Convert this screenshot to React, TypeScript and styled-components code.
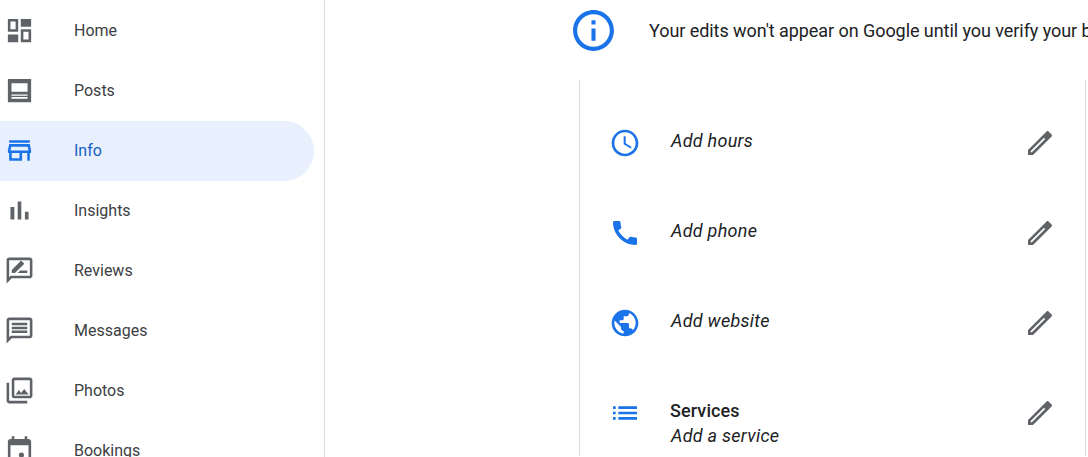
import React from "react";
import styled, { createGlobalStyle } from "styled-components";

const GlobalStyle = createGlobalStyle`
  html, body {
    margin: 0;
    height: 100%;
    overflow: hidden;
    background: #ffffff;
    font-family: Roboto, "Liberation Sans", sans-serif;
  }
`;

const StPage = styled.div`
  display: flex;
  width: 1088px;
  height: 457px;
  overflow: hidden;
`;

const StSidebar = styled.nav`
  flex: 0 0 325px;
  height: 457px;
  padding-right: 10px;
  box-sizing: border-box;
  border-right: 1px solid #dadce0;
  overflow: hidden;
`;

const StNavItem = styled.div<{ $active?: boolean }>`
  display: flex;
  align-items: center;
  gap: 39.5px;
  flex: none;
  height: 60px;
  box-sizing: border-box;
  padding-left: 3.5px;
  padding-bottom: ${({ $active }) => ($active ? "2px" : "0")};
  margin: ${({ $active }) => ($active ? "1px 0 -1px" : "0")};
  border-radius: 0 30px 30px 0;
  background: ${({ $active }) => ($active ? "#e8f0fe" : "transparent")};
  color: ${({ $active }) => ($active ? "#185fc4" : "#3c4043")};
  font-size: 16px;
`;

const StNavIcon = styled.svg<{ $active?: boolean }>`
  flex: none;
  width: 31px;
  height: 31px;
  margin-top: 1px;
  fill: ${({ $active }) => ($active ? "#1a73e8" : "#5f6368")};
`;

const StMain = styled.main`
  flex: 1;
  min-width: 0;
  padding-left: 254px;
  overflow: hidden;
`;

const StBanner = styled.div`
  display: flex;
  align-items: center;
  gap: 31px;
  height: 80px;
  margin-left: -10px;
  padding-bottom: 20px;
  box-sizing: border-box;
  white-space: nowrap;
  color: #202124;
  font-size: 18px;
  letter-spacing: -0.06px;
`;

const StBannerIcon = styled.svg`
  flex: none;
  width: 49px;
  height: 49px;
  fill: #1a73e8;
`;

const StCard = styled.section`
  width: 505px;
  padding-top: 16px;
  border-left: 1px solid #dadce0;
  border-right: 1px solid #dadce0;
`;

const StRow = styled.div`
  display: flex;
  align-items: flex-start;
  height: 90px;
  padding: 31px 0 0 29px;
  box-sizing: border-box;
`;

const StRowIcon = styled.svg<{ $tone: "blue" | "grey" }>`
  display: block;
  flex: none;
  width: 32px;
  height: 32px;
  fill: ${({ $tone }) => ($tone === "blue" ? "#1a73e8" : "#5f6368")};
`;

const StRowBody = styled.div`
  flex: 1;
  margin-left: 30px;
  padding-top: 1px;
  color: #202124;
  font-size: 18px;
  line-height: 25px;
`;

const StRowTitle = styled.div`
  margin-left: -1px;
  font-weight: 500;
  letter-spacing: 0.1px;
`;

const StRowValue = styled.div`
  font-style: italic;
  letter-spacing: 0.27px;
`;

const StEditSlot = styled.div`
  flex: none;
  margin-right: 29px;
`;

type Nav = { label: string; paths: string; active?: boolean };

const navItems: Nav[] = [
  {
    label: "Home",
    paths:
      "M3 3h8v10H3V3zm2 2v6h4V5H5zm8-2h8v6h-8V3zM3 15h8v6H3v-6zm10-4h8v10h-8V11zm2 2v6h4v-6h-4z",
  },
  {
    label: "Posts",
    paths:
      "M3 3h18v18H3V3zm2.8 3.4v6.5h12.4V6.4H5.8zm0 8.6v1h12.4v-1H5.8zm0 2v1.4h12.4V17H5.8z",
  },
  {
    label: "Info",
    active: true,
    paths:
      "M18.36 9l.6 3H5.04l.6-3h12.72M20 4H4v2h16V4zm0 3H4l-1 5v2h1v6h10v-6h4v6h2v-6h1v-2l-1-5zM6 18v-4h6v4H6z",
  },
  {
    label: "Insights",
    paths: "M5 9.2h3V19H5zM10.6 5h2.8v14h-2.8zm5.6 8H19v6h-2.8z",
  },
  {
    label: "Reviews",
    paths:
      "M20 2H4c-1.1 0-1.99.9-1.99 2L2 22l4-4h14c1.1 0 2-.9 2-2V4c0-1.1-.9-2-2-2zm0 14H5.17L4 17.17V4h16v12zM18 14h-7.5l2-2H18v2zM6 14v-2.47l6.88-6.88c.2-.2.51-.2.71 0l1.77 1.77c.2.2.2.51 0 .71L8.47 14H6z",
  },
  {
    label: "Messages",
    paths:
      "M20 2H4c-1.1 0-2 .9-2 2v18l4-4h14c1.1 0 2-.9 2-2V4c0-1.1-.9-2-2-2zm0 14H5.17L4 17.17V4h16v12zM6 12h12v2H6zm0-3h12v2H6zm0-3h12v2H6z",
  },
  {
    label: "Photos",
    paths:
      "M20 4v12H8V4h12m0-2H8c-1.1 0-2 .9-2 2v12c0 1.1.9 2 2 2h12c1.1 0 2-.9 2-2V4c0-1.1-.9-2-2-2zm-8.5 9.67l1.69 2.26 2.48-3.1L19 15H9zM2 6v14c0 1.1.9 2 2 2h14v-2H4V6H2z",
  },
  {
    label: "Bookings",
    paths:
      "M19 3h-1V1h-2v2H8V1H6v2H5c-1.11 0-2 .9-2 2v14c0 1.1.89 2 2 2h14c1.1 0 2-.9 2-2V5c0-1.1-.9-2-2-2zm0 16H5V8h14v11zM13.5 13.5a2 2 0 1 0 0 4 2 2 0 0 0 0-4z",
  },
];

// solid rounded cap joined to the body, hollow shaft
const editPath =
  "M3 17.25L16.96 3.29c.39-.39 1.02-.39 1.41 0l2.34 2.34c.39.39.39 1.02 0 1.41L6.75 21H3v-3.75zM5 19h.92L15.9 9.02l-.92-.92L5 18.08V19z";

type Info = { icon: string; title?: string; value: string };

const infoRows: Info[] = [
  {
    value: "Add hours",
    icon: "M11.99 2C6.47 2 2 6.48 2 12s4.47 10 9.99 10C17.52 22 22 17.52 22 12S17.52 2 11.99 2zM12 20c-4.42 0-8-3.58-8-8s3.58-8 8-8 8 3.58 8 8-3.58 8-8 8zM12.5 7H11v6l5.25 3.15.75-1.23-4.5-2.67z",
  },
  {
    value: "Add phone",
    icon: "M20.01 15.38c-1.23 0-2.42-.2-3.53-.56-.35-.12-.74-.03-1.01.24l-1.57 1.97c-2.83-1.35-5.48-3.9-6.89-6.83l1.95-1.66c.27-.28.35-.67.24-1.02-.37-1.11-.56-2.3-.56-3.53 0-.54-.45-.99-.99-.99H4.19C3.65 3 3 3.24 3 3.99 3 13.28 10.73 21 20.01 21c.71 0 .99-.63.99-1.18v-3.45c0-.54-.45-.99-.99-.99z",
  },
  {
    value: "Add website",
    icon: "M12 2C6.48 2 2 6.48 2 12s4.48 10 10 10 10-4.48 10-10S17.52 2 12 2zm-1 17.93c-3.95-.49-7-3.85-7-7.93 0-.62.08-1.21.21-1.79L9 15v1c0 1.1.9 2 2 2v1.93zm6.9-2.54c-.26-.81-1-1.39-1.9-1.39h-1v-3c0-.55-.45-1-1-1H8v-2h2c.55 0 1-.45 1-1V7h2c1.1 0 2-.9 2-2v-.41c2.93 1.19 5 4.06 5 7.41 0 2.08-.8 3.97-2.1 5.39z",
  },
  {
    title: "Services",
    value: "Add a service",
    icon: "M3 13h2v-2H3v2zm0 4h2v-2H3v2zm0-8h2V7H3v2zm4 4h14v-2H7v2zm0 4h14v-2H7v2zM7 7v2h14V7H7z",
  },
];

const App = () => {
  return (
    <>
      <GlobalStyle />
      <StPage>
        <StSidebar>
          {navItems.map((item) => (
            <StNavItem key={item.label} $active={item.active}>
              <StNavIcon viewBox="0 0 24 24" $active={item.active}>
                <path d={item.paths} />
              </StNavIcon>
              {item.label}
            </StNavItem>
          ))}
        </StSidebar>
        <StMain>
          <StBanner>
            <StBannerIcon viewBox="0 0 24 24">
              <path d="M11 7h2v2h-2zm0 4h2v6h-2zm1-9C6.48 2 2 6.48 2 12s4.48 10 10 10 10-4.48 10-10S17.52 2 12 2zm0 18c-4.41 0-8-3.59-8-8s3.59-8 8-8 8 3.59 8 8-3.59 8-8 8z" />
            </StBannerIcon>
            Your edits won't appear on Google until you verify your business
          </StBanner>
          <StCard>
            {infoRows.map((row) => (
              <StRow key={row.value}>
                <StRowIcon viewBox="0 0 24 24" $tone="blue">
                  <path d={row.icon} />
                </StRowIcon>
                <StRowBody>
                  {row.title && <StRowTitle>{row.title}</StRowTitle>}
                  <StRowValue>{row.value}</StRowValue>
                </StRowBody>
                <StEditSlot>
                  <StRowIcon viewBox="0 0 24 24" $tone="grey">
                    <path d={editPath} />
                  </StRowIcon>
                </StEditSlot>
              </StRow>
            ))}
          </StCard>
        </StMain>
      </StPage>
    </>
  );
};

export default App;
